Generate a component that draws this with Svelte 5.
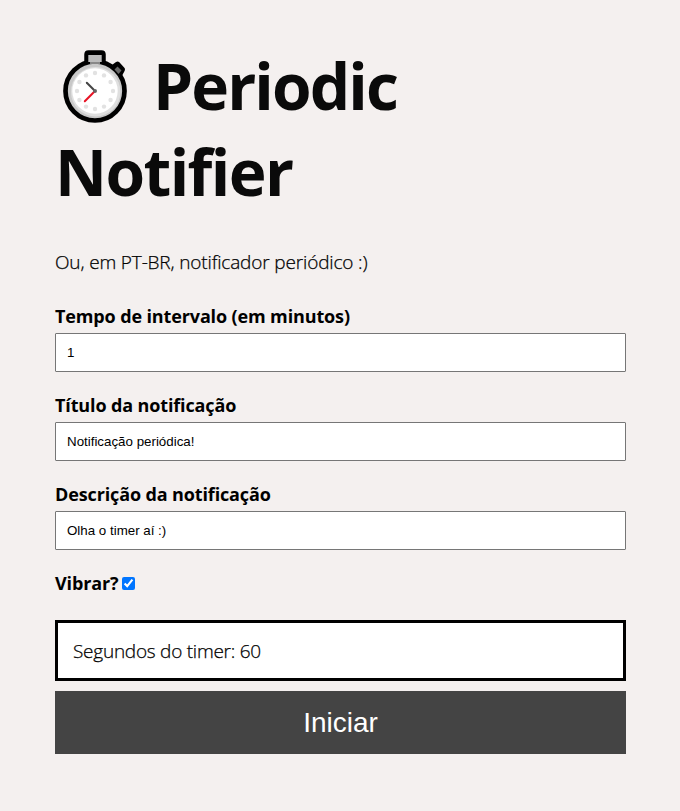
<script>
  let minutes = $state('1');
  let title = $state('Notificação periódica!');
  let description = $state('Olha o timer aí :)');
  let vibrate = $state(true);
  const dots = Array.from({ length: 12 }, (_, i) => ({
    x: 45 + 18 * Math.sin((i * Math.PI) / 6),
    y: 51 - 18 * Math.cos((i * Math.PI) / 6)
  }));
</script>

<main>
  <h1>
    <span class="line"><svg class="watch" viewBox="8 4 74 84" aria-hidden="true">
      <path d="M36.5 24V14.5q0-2 2-2h13q2 0 2 2V24Z" fill="#000" stroke="#000" stroke-width="4.5" stroke-linejoin="round" />
      <path d="m62 28 5.5-4 5 5.5L69 36Z" fill="#000" stroke="#000" stroke-width="5" stroke-linejoin="round" />
      <circle cx="45" cy="51" r="29.5" fill="#c8c8c8" stroke="#000" stroke-width="4.7" />
      <path d="M38.3 15h13.4v7H38.3Z" fill="#bcbcbc" />
      <path d="M40 22h10v2H40Z" fill="#888" />
      <path d="m64.5 29.5 3-3 4 4-3 3.5Z" fill="#666" />
      <circle cx="45.7" cy="51.7" r="24.7" fill="#dfdfdf" />
      <circle cx="45" cy="51" r="22.7" fill="#fff" />
      {#each dots as dot}
        <circle cx={dot.x} cy={dot.y} r="2.2" fill="#e2e2e2" />
      {/each}
      <path d="m36.8 42.8 8.2 8.2" stroke="#444" stroke-width="2" stroke-linecap="round" />
      <path d="M45 51 34.8 61.2" stroke="#e81224" stroke-width="2" stroke-linecap="round" />
      <circle cx="45" cy="51" r="2" fill="#666" />
    </svg><span class="periodic">Periodic</span></span>
    <span class="line notifier">Notifier</span>
  </h1>
  <p class="subtitle">Ou, em PT-BR, notificador periódico :)</p>

  <label class="field"><span>Tempo de intervalo (em minutos)</span><input bind:value={minutes} /></label>
  <label class="field"><span>Título da notificação</span><input bind:value={title} /></label>
  <label class="field"><span>Descrição da notificação</span><input bind:value={description} /></label>
  <label class="check"><span>Vibrar?</span><input type="checkbox" bind:checked={vibrate} /></label>

  <div class="timer"><span>Segundos do timer: 60</span></div>
  <button>Iniciar</button>
</main>

<style>
  :global(body) { background: #f4f0ef; }
  main {
    box-sizing: border-box;
    height: 811px;
    padding: 43px 54px 0 55px;
    font-family: "Open Sans", "Noto Sans", sans-serif;
    font-size: 19px;
    color: #000;
    display: flex;
    flex-direction: column;
  }
  h1 { margin: 0; font-size: 64px; line-height: 86px; font-weight: 700; color: #0a0a0a; }
  .line { display: flex; height: 86px; white-space: nowrap; }
  .watch { width: 74px; height: 84px; margin: 1px 21px 0 3px; flex: none; }
  .periodic { letter-spacing: -1.9px; }
  .notifier { letter-spacing: -1.6px; }
  .subtitle {
    margin: 34px 0 27px;
    line-height: 27px;
    font-weight: 300;
    letter-spacing: -0.15px;
    white-space: nowrap;
    -webkit-text-stroke: 0.25px #000;
  }
  .field { display: flex; flex-direction: column; height: 89px; }
  .field span, .check span { line-height: 27px; font-size: 18px; font-weight: 700; white-space: nowrap; }
  .field span { height: 30px; letter-spacing: -0.13px; }
  .check span { letter-spacing: -0.15px; }
  .field input {
    box-sizing: border-box;
    width: 100%;
    height: 39px;
    margin: 0;
    padding: 0 11px;
    border: 1px solid #767676;
    border-radius: 1px;
    background: #fff;
    color: #000;
    font: 13.333px "Liberation Sans", Arial, sans-serif;
  }
  .check { display: flex; height: 50px; }
  .check input { width: 13px; height: 13px; margin: 7px 0 0 4px; }
  .timer {
    box-sizing: border-box;
    height: 61px;
    flex: none;
    padding: 15px 15px 13px;
    border: 3px solid #000;
    background: #fff;
    line-height: 27px;
    font-weight: 300;
    letter-spacing: -0.25px;
    -webkit-text-stroke: 0.25px #000;
  }
  button {
    height: 63px;
    margin: 10px 0 0;
    padding: 0;
    border: 0;
    background: #444;
    color: #fff;
    font: 28px "Liberation Sans", Arial, sans-serif;
  }
</style>
